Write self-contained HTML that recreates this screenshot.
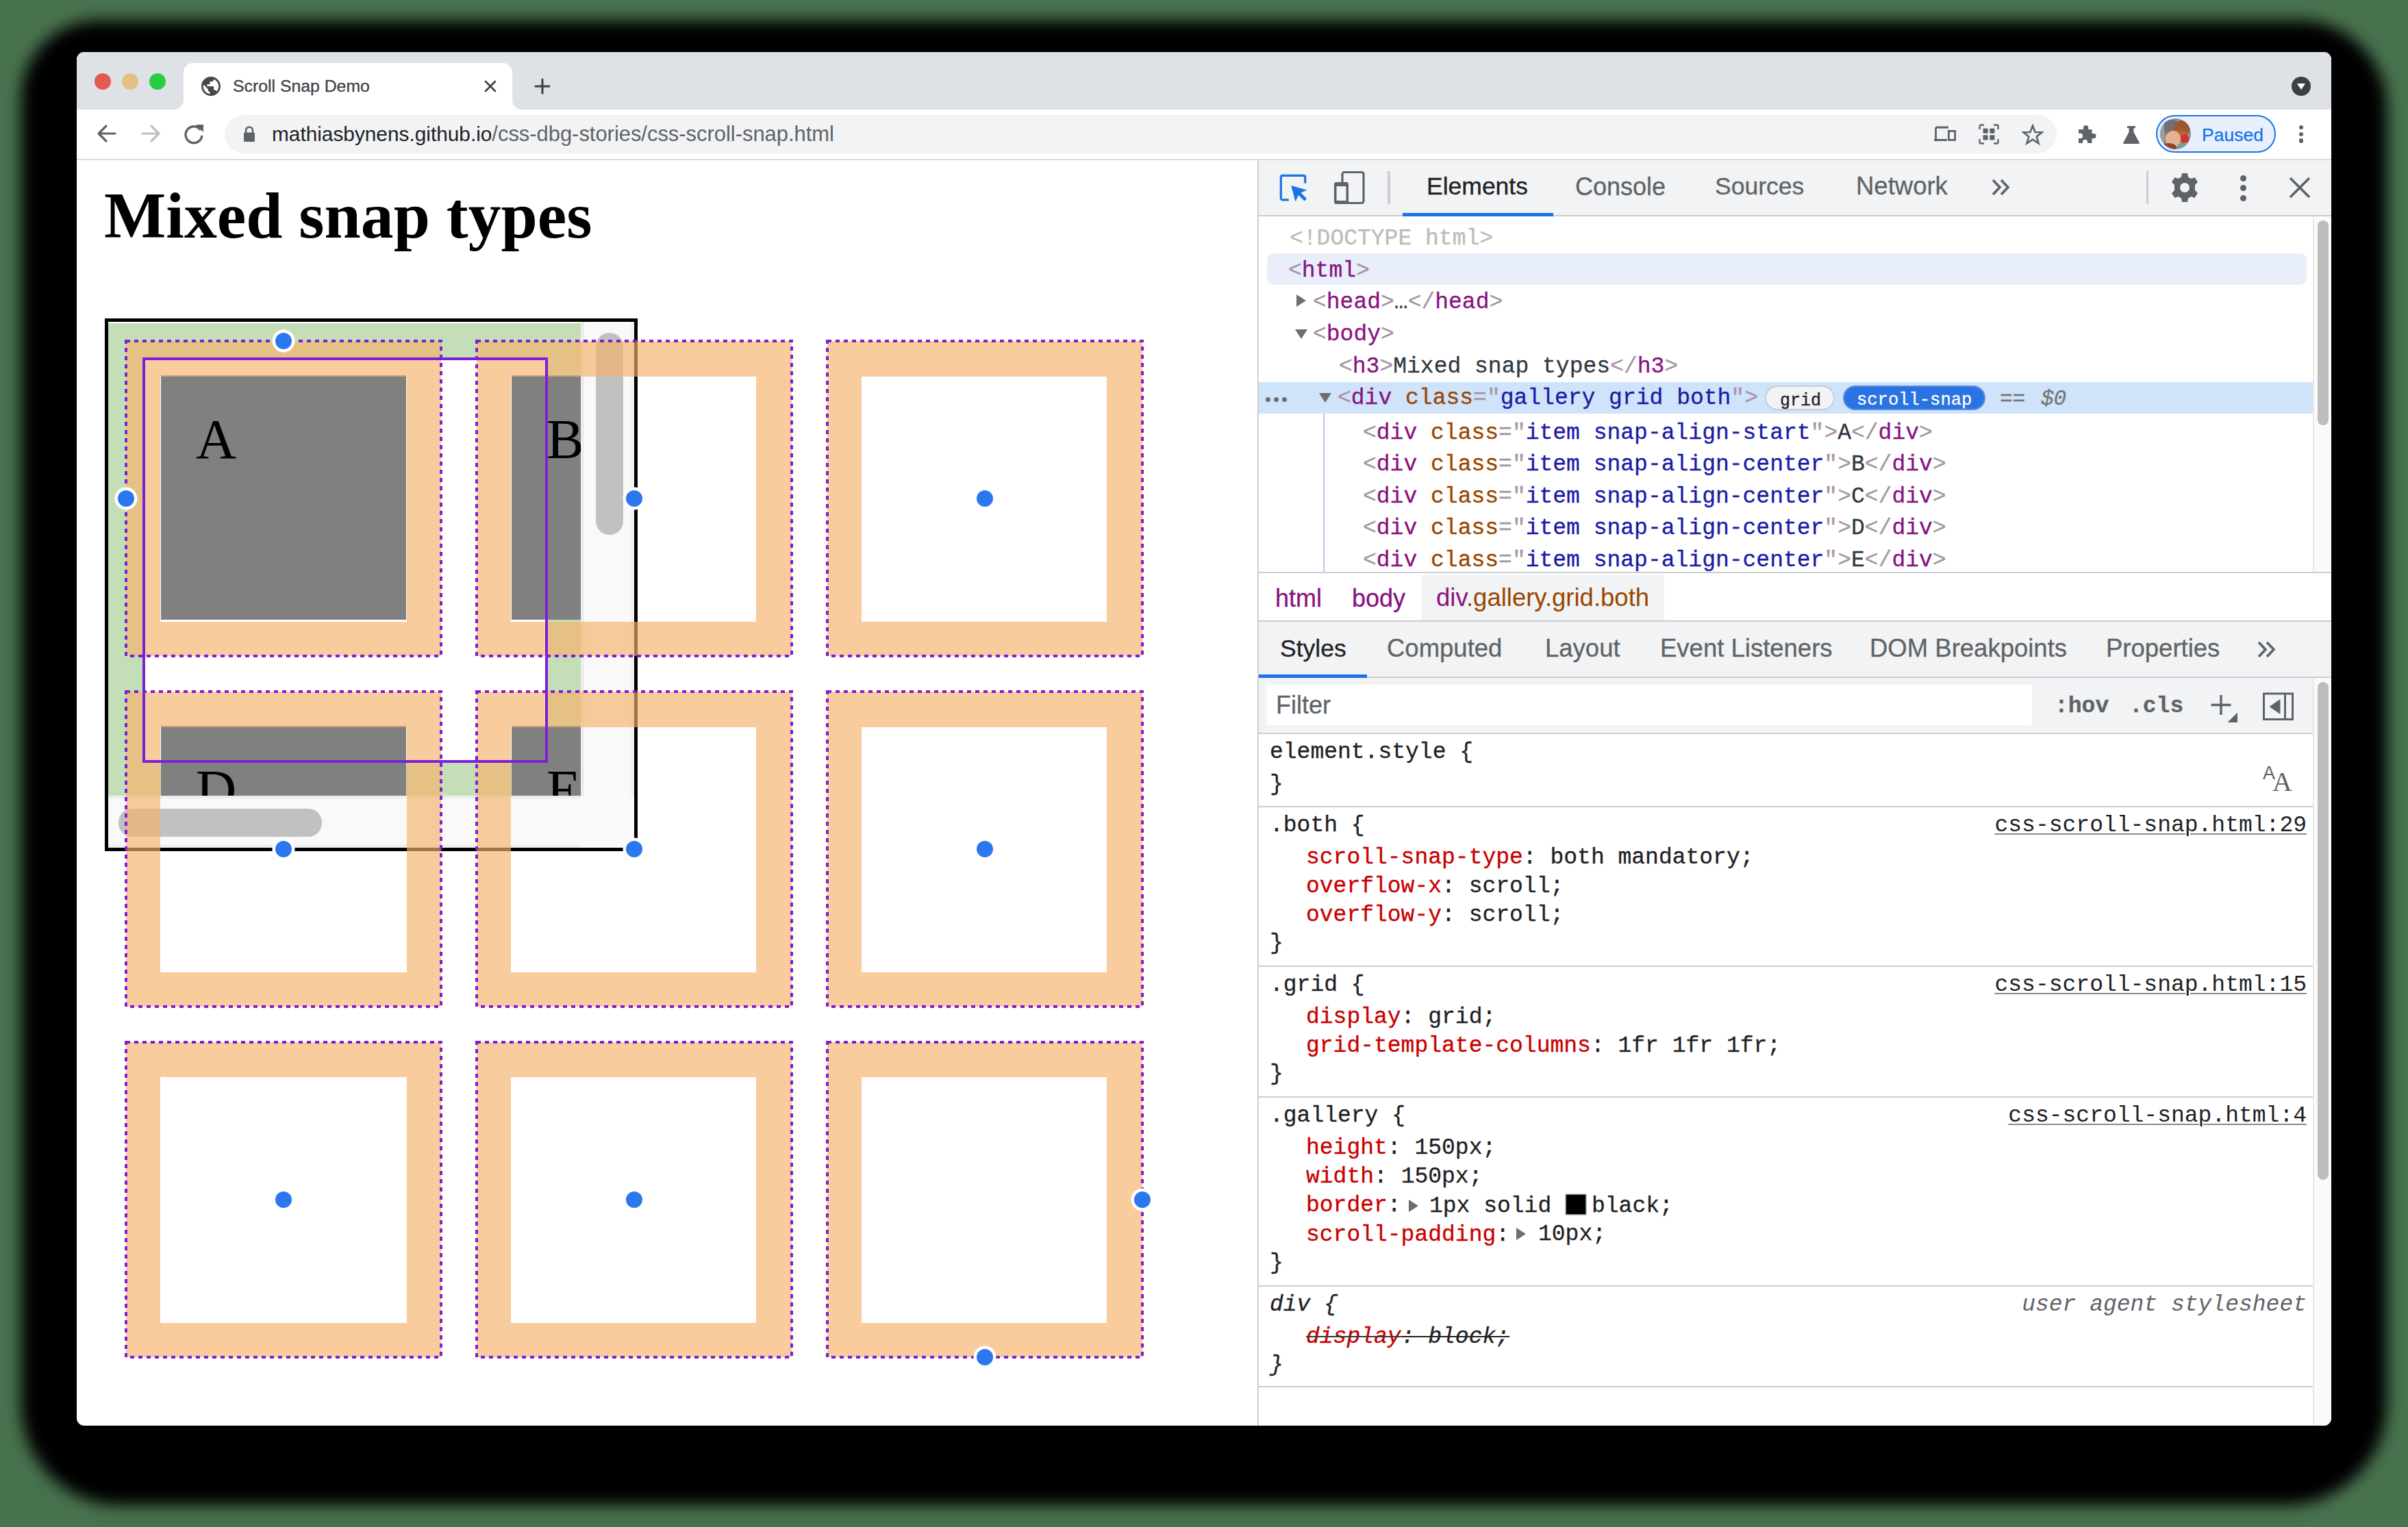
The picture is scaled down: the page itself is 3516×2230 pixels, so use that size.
<!DOCTYPE html><html><head><meta charset="utf-8"><style>html,body{margin:0;padding:0}.m{-webkit-text-stroke:0.3px currentColor}body{width:3516px;height:2230px;position:relative;overflow:hidden;background:#48724E}</style></head><body>
<div style="position:absolute;left:31px;top:30px;width:3454px;height:2168px;background:#000;border-radius:113px 127px 148px 145px;filter:blur(11px)"></div>
<div style="position:absolute;left:0;top:0;width:3516px;height:2230px;clip-path:inset(76px 112px 148px 112px round 11px)">
<div style="position:absolute;left:112px;top:76px;width:3292px;height:2006px;background:#fff;"></div>
<div style="position:absolute;left:112px;top:76px;width:3292px;height:84px;background:#DEE1E6;"></div>
<div style="position:absolute;left:138px;top:107px;width:24px;height:24px;border-radius:50%;background:#E25A50"></div>
<div style="position:absolute;left:178px;top:107px;width:24px;height:24px;border-radius:50%;background:#E4C082"></div>
<div style="position:absolute;left:218px;top:107px;width:24px;height:24px;border-radius:50%;background:#28CD41"></div>
<div style="position:absolute;left:268px;top:92px;width:480px;height:68px;background:#fff;border-radius:14px 14px 0 0"></div>
<svg style="position:absolute;left:254px;top:146px" width="14" height="14"><path d="M0 14 A14 14 0 0 0 14 0 L14 14 Z" fill="#fff"/></svg>
<svg style="position:absolute;left:748px;top:146px" width="14" height="14"><path d="M0 0 A14 14 0 0 0 14 14 L0 14 Z" fill="#fff"/></svg>
<svg style="position:absolute;left:294px;top:112px;" width="28" height="28" viewBox="0 0 28 28"><g transform="scale(1.4) translate(-2 -2)"><path d="M12 2C6.48 2 2 6.48 2 12s4.48 10 10 10 10-4.48 10-10S17.52 2 12 2zm-1 17.93c-3.95-.49-7-3.85-7-7.93 0-.62.08-1.21.21-1.79L9 15v1c0 1.1.9 2 2 2v1.93zm6.9-2.54c-.26-.81-1-1.39-1.9-1.39h-1v-3c0-.55-.45-1-1-1H8v-2h2c.55 0 1-.45 1-1V7h2c1.1 0 2-.9 2-2v-.41c2.93 1.19 5 4.06 5 7.41 0 2.08-.8 3.97-2.1 5.39z" fill="#45484C"/></g></svg>
<div class="m" style="position:absolute;left:340.00px;top:114.01px;font:normal normal 24.8px/24.8px 'Liberation Sans', sans-serif;color:#3C4043;white-space:pre;">Scroll Snap Demo</div>
<svg style="position:absolute;left:707px;top:117px;" width="18" height="18" viewBox="0 0 18 18"><path d="M2 2 L16 16 M16 2 L2 16" stroke="#3C4043" stroke-width="2.6" stroke-linecap="round"/></svg>
<svg style="position:absolute;left:780px;top:114px;" width="24" height="24" viewBox="0 0 24 24"><path d="M12 2 V22 M2 12 H22" stroke="#3C4043" stroke-width="3" stroke-linecap="round"/></svg>
<svg style="position:absolute;left:3346px;top:112px;" width="28" height="28" viewBox="0 0 28 28"><circle cx="14" cy="14" r="14" fill="#3C4043"/><path d="M8 10 H20 L14 19 Z" fill="#fff"/></svg>
<div style="position:absolute;left:112px;top:160px;width:3292px;height:72px;background:#fff;"></div>
<div style="position:absolute;left:112px;top:232px;width:3292px;height:2px;background:#DADCE0;"></div>
<svg style="position:absolute;left:138px;top:177px;" width="36" height="36" viewBox="0 0 36 36"><path d="M30 18 H7 M17 7 L6 18 L17 29" fill="none" stroke="#5F6368" stroke-width="3.2" stroke-linecap="round" stroke-linejoin="round"/></svg>
<svg style="position:absolute;left:202px;top:177px;" width="36" height="36" viewBox="0 0 36 36"><path d="M6 18 H29 M19 7 L30 18 L19 29" fill="none" stroke="#BDC1C6" stroke-width="3.2" stroke-linecap="round" stroke-linejoin="round"/></svg>
<svg style="position:absolute;left:266px;top:178px;" width="36" height="36" viewBox="0 0 36 36"><path d="M27 12 A12 12 0 1 0 29 20" fill="none" stroke="#5F6368" stroke-width="3.4"/><path d="M20 4 L31 4 L31 15 Z" fill="#5F6368"/></svg>
<div style="position:absolute;left:328px;top:168px;width:2675px;height:56px;border-radius:28px;background:#F1F3F4"></div>
<svg style="position:absolute;left:354px;top:183px;" width="20" height="26" viewBox="0 0 20 26"><path d="M5 11 V7.5 A5 5 0 0 1 15 7.5 V11" fill="none" stroke="#5F6368" stroke-width="2.6"/><rect x="2" y="10.5" width="16" height="13.5" rx="1.5" fill="#5F6368"/></svg>
<div style="position:absolute;left:397px;top:180.8px;font:normal 29.8px/29.8px 'Liberation Sans', sans-serif;white-space:pre"><span style="color:#202124">mathiasbynens.github.io</span><span style="color:#5F6368;font-size:30.9px">/css-dbg-stories/css-scroll-snap.html</span></div>
<svg style="position:absolute;left:2823px;top:184px;" width="34" height="24" viewBox="0 0 34 24"><path d="M3.5 2 H22 M3.5 2 V19 M1 20.5 H20" stroke="#5F6368" stroke-width="2.8" fill="none"/><rect x="22.4" y="7.4" width="9.2" height="13" fill="none" stroke="#5F6368" stroke-width="2.8"/></svg>
<svg style="position:absolute;left:2889px;top:181px;" width="30" height="30" viewBox="0 0 30 30"><path d="M1.5 8 V3.5 Q1.5 1.5 3.5 1.5 H8 M22 1.5 H26.5 Q28.5 1.5 28.5 3.5 V8 M28.5 22 V26.5 Q28.5 28.5 26.5 28.5 H22 M8 28.5 H3.5 Q1.5 28.5 1.5 26.5 V22" stroke="#5F6368" stroke-width="2.4" fill="none"/><rect x="6.5" y="6.5" width="7.2" height="7.2" rx="1.3" fill="#5F6368"/><rect x="16.3" y="6.5" width="7.2" height="7.2" rx="1.3" fill="#5F6368"/><rect x="6.5" y="16.3" width="7.2" height="7.2" rx="1.3" fill="#5F6368"/><rect x="16.3" y="16.3" width="7.2" height="7.2" rx="1.3" fill="#5F6368"/></svg>
<svg style="position:absolute;left:2952px;top:181px;" width="32" height="31" viewBox="0 0 32 31"><path d="M16 2.5 L19.6 12 L29.5 12.3 L21.7 18.5 L24.6 28.3 L16 22.6 L7.4 28.3 L10.3 18.5 L2.5 12.3 L12.4 12 Z" fill="none" stroke="#5F6368" stroke-width="2.6" stroke-linejoin="miter"/></svg>
<svg style="position:absolute;left:3033px;top:181px;" width="30" height="30" viewBox="0 0 30 30"><path d="M2 8 H9 V5.5 A3.6 3.6 0 0 1 16.2 5.5 V8 H21.5 V14 H24 A3.6 3.6 0 0 1 24 21.2 H21.5 V28 H15 V25.5 A3.6 3.6 0 0 0 8 25.5 V28 H2 V21 H4.5 A3.6 3.6 0 0 0 4.5 13.8 H2 Z" fill="#5F6368"/></svg>
<svg style="position:absolute;left:3099px;top:183px;" width="26" height="28" viewBox="0 0 26 28"><path d="M7 1 H19 V4 H16.5 V10 L24.5 25 Q25.5 27 23.5 27 H2.5 Q0.5 27 1.5 25 L9.5 10 V4 H7 Z" fill="#5F6368"/></svg>
<div style="position:absolute;left:3148px;top:168px;width:175px;height:55px;box-sizing:border-box;border:2.5px solid #1A73E8;border-radius:28px;background:#E8F0FE"></div>
<svg style="position:absolute;left:3154px;top:173px;" width="45" height="45" viewBox="0 0 45 45"><defs><clipPath id="av"><circle cx="22.5" cy="22.5" r="22.5"/></clipPath></defs><g clip-path="url(#av)"><rect width="45" height="45" fill="#8C8F93"/><ellipse cx="16" cy="12" rx="14" ry="10" fill="#6E7074"/><ellipse cx="32" cy="14" rx="12" ry="11" fill="#A0582E"/><ellipse cx="24" cy="22" rx="16" ry="5" fill="#B5652F"/><ellipse cx="19" cy="30" rx="11" ry="12" fill="#E2B394"/><ellipse cx="36" cy="30" rx="6" ry="7" fill="#D8322A"/><ellipse cx="38" cy="42" rx="9" ry="7" fill="#6FA79A"/><ellipse cx="12" cy="42" rx="12" ry="6" fill="#8A4A2A"/><rect x="0" y="0" width="6" height="45" fill="#9A9DA1"/></g></svg>
<div class="m" style="position:absolute;left:3215.00px;top:183.57px;font:normal normal 26.5px/26.5px 'Liberation Sans', sans-serif;color:#1A73E8;white-space:pre;">Paused</div>
<div style="position:absolute;left:3356.5px;top:182.7px;width:6.6px;height:6.6px;border-radius:50%;background:#5F6368"></div>
<div style="position:absolute;left:3356.5px;top:192.7px;width:6.6px;height:6.6px;border-radius:50%;background:#5F6368"></div>
<div style="position:absolute;left:3356.5px;top:202.29999999999998px;width:6.6px;height:6.6px;border-radius:50%;background:#5F6368"></div>
<div style="position:absolute;left:152.00px;top:268.35px;font:normal bold 95.7px/95.7px 'Liberation Serif', serif;color:#000;white-space:pre;">Mixed snap types</div>
<div style="position:absolute;left:153px;top:465px;width:778px;height:778px;background:#000;"></div>
<div style="position:absolute;left:158px;top:470px;width:768px;height:768px;background:#fff;"></div>
<div style="position:absolute;left:158px;top:470px;width:690px;height:692px;overflow:hidden">
<div style="position:absolute;left:0px;top:2px;width:690px;height:50px;background:rgba(147,196,125,0.55);"></div>
<div style="position:absolute;left:0px;top:644px;width:690px;height:48px;background:rgba(147,196,125,0.55);"></div>
<div style="position:absolute;left:0px;top:52px;width:50px;height:592px;background:rgba(147,196,125,0.55);"></div>
<div style="position:absolute;left:642px;top:52px;width:48px;height:592px;background:rgba(147,196,125,0.55);"></div>
<div style="position:absolute;left:77px;top:77.5px;width:358px;height:357.2px;background:#808080;"></div>
<div style="position:absolute;left:128px;top:125.0px;font:normal 82px/94px 'Liberation Serif', serif;color:#000">A</div>
<div style="position:absolute;left:589px;top:77.5px;width:358px;height:357.2px;background:#808080;"></div>
<div style="position:absolute;left:640px;top:125.0px;font:normal 82px/94px 'Liberation Serif', serif;color:#000">B</div>
<div style="position:absolute;left:77px;top:589.5px;width:358px;height:357.2px;background:#808080;"></div>
<div style="position:absolute;left:128px;top:637.0px;font:normal 82px/94px 'Liberation Serif', serif;color:#000">D</div>
<div style="position:absolute;left:589px;top:589.5px;width:358px;height:357.2px;background:#808080;"></div>
<div style="position:absolute;left:640px;top:637.0px;font:normal 82px/94px 'Liberation Serif', serif;color:#000">E</div>
</div>
<div style="position:absolute;left:848px;top:470px;width:78px;height:692px;background:#F9F9F9;box-shadow:inset 5px 0 0 #EDEDED, inset -5px 0 0 #F1F1F1"></div>
<div style="position:absolute;left:158px;top:1162px;width:690px;height:76px;background:#F9F9F9;box-shadow:inset 0 4px 0 #EDEDED, inset 0 -5px 0 #F1F1F1"></div>
<div style="position:absolute;left:848px;top:1162px;width:78px;height:76px;background:#F9F9F9;"></div>
<div style="position:absolute;left:870px;top:486px;width:40px;height:295px;background:#C1C1C1;border-radius:20px"></div>
<div style="position:absolute;left:173px;top:1181px;width:297px;height:41px;background:#C1C1C1;border-radius:20px"></div>
<div style="position:absolute;left:184px;top:498px;width:460px;height:460px;box-sizing:border-box;border:50px solid rgba(246,178,107,0.66);border-top-width:52px;border-right-width:50px"></div>
<div style="position:absolute;left:696px;top:498px;width:460px;height:460px;box-sizing:border-box;border:50px solid rgba(246,178,107,0.66);border-top-width:52px;border-right-width:52px"></div>
<div style="position:absolute;left:1208px;top:498px;width:460px;height:460px;box-sizing:border-box;border:50px solid rgba(246,178,107,0.66);border-top-width:52px;border-right-width:52px"></div>
<div style="position:absolute;left:184px;top:1010px;width:460px;height:460px;box-sizing:border-box;border:50px solid rgba(246,178,107,0.66);border-top-width:52px;border-right-width:50px"></div>
<div style="position:absolute;left:696px;top:1010px;width:460px;height:460px;box-sizing:border-box;border:50px solid rgba(246,178,107,0.66);border-top-width:52px;border-right-width:52px"></div>
<div style="position:absolute;left:1208px;top:1010px;width:460px;height:460px;box-sizing:border-box;border:50px solid rgba(246,178,107,0.66);border-top-width:52px;border-right-width:52px"></div>
<div style="position:absolute;left:184px;top:1522px;width:460px;height:460px;box-sizing:border-box;border:50px solid rgba(246,178,107,0.66);border-top-width:51px;border-right-width:50px"></div>
<div style="position:absolute;left:696px;top:1522px;width:460px;height:460px;box-sizing:border-box;border:50px solid rgba(246,178,107,0.66);border-top-width:51px;border-right-width:52px"></div>
<div style="position:absolute;left:1208px;top:1522px;width:460px;height:460px;box-sizing:border-box;border:50px solid rgba(246,178,107,0.66);border-top-width:51px;border-right-width:52px"></div>
<svg style="position:absolute;left:0;top:0" width="1836" height="2082"><rect x="184" y="498" width="460" height="460" fill="none" stroke="#7D1FD6" stroke-width="4" stroke-dasharray="6 6"/><rect x="696" y="498" width="460" height="460" fill="none" stroke="#7D1FD6" stroke-width="4" stroke-dasharray="6 6"/><rect x="1208" y="498" width="460" height="460" fill="none" stroke="#7D1FD6" stroke-width="4" stroke-dasharray="6 6"/><rect x="184" y="1010" width="460" height="460" fill="none" stroke="#7D1FD6" stroke-width="4" stroke-dasharray="6 6"/><rect x="696" y="1010" width="460" height="460" fill="none" stroke="#7D1FD6" stroke-width="4" stroke-dasharray="6 6"/><rect x="1208" y="1010" width="460" height="460" fill="none" stroke="#7D1FD6" stroke-width="4" stroke-dasharray="6 6"/><rect x="184" y="1522" width="460" height="460" fill="none" stroke="#7D1FD6" stroke-width="4" stroke-dasharray="6 6"/><rect x="696" y="1522" width="460" height="460" fill="none" stroke="#7D1FD6" stroke-width="4" stroke-dasharray="6 6"/><rect x="1208" y="1522" width="460" height="460" fill="none" stroke="#7D1FD6" stroke-width="4" stroke-dasharray="6 6"/><rect x="210" y="524" width="588" height="588" fill="none" stroke="#7D1FD6" stroke-width="4"/><circle cx="414" cy="498" r="16.5" fill="#fff"/><circle cx="414" cy="498" r="12" fill="#2B78EE"/><circle cx="184" cy="728" r="16.5" fill="#fff"/><circle cx="184" cy="728" r="12" fill="#2B78EE"/><circle cx="926" cy="728" r="16.5" fill="#fff"/><circle cx="926" cy="728" r="12" fill="#2B78EE"/><circle cx="1438" cy="728" r="16.5" fill="#fff"/><circle cx="1438" cy="728" r="12" fill="#2B78EE"/><circle cx="414" cy="1240" r="16.5" fill="#fff"/><circle cx="414" cy="1240" r="12" fill="#2B78EE"/><circle cx="926" cy="1240" r="16.5" fill="#fff"/><circle cx="926" cy="1240" r="12" fill="#2B78EE"/><circle cx="1438" cy="1240" r="16.5" fill="#fff"/><circle cx="1438" cy="1240" r="12" fill="#2B78EE"/><circle cx="414" cy="1752" r="16.5" fill="#fff"/><circle cx="414" cy="1752" r="12" fill="#2B78EE"/><circle cx="926" cy="1752" r="16.5" fill="#fff"/><circle cx="926" cy="1752" r="12" fill="#2B78EE"/><circle cx="1668" cy="1752" r="16.5" fill="#fff"/><circle cx="1668" cy="1752" r="12" fill="#2B78EE"/><circle cx="1438" cy="1982" r="16.5" fill="#fff"/><circle cx="1438" cy="1982" r="12" fill="#2B78EE"/></svg>
<div style="position:absolute;left:1836px;top:234px;width:2px;height:1848px;background:#CACDD1;"></div>
<div style="position:absolute;left:1838px;top:234px;width:1566px;height:80px;background:#F1F3F4;"></div>
<div style="position:absolute;left:1838px;top:314px;width:1566px;height:2px;background:#CACDD1;"></div>
<svg style="position:absolute;left:1866px;top:252px;" width="48" height="48" viewBox="0 0 48 48"><path d="M15.8 39.8 H7 Q4.3 39.8 4.3 37 V7 Q4.3 4.3 7 4.3 H37 Q39.7 4.3 39.7 7 V15.6" fill="none" stroke="#1A73E8" stroke-width="3.2"/><path d="M19.3 19 L42.4 25.5 L33.5 29.5 L42 38.2 L38.6 41.6 L30 33 L25.4 42.5 Z" fill="#1A73E8"/></svg>
<svg style="position:absolute;left:1944px;top:248px;" width="50" height="52" viewBox="0 0 50 52"><rect x="16" y="3.5" width="31" height="45" rx="3" fill="none" stroke="#5F6368" stroke-width="3.2"/><rect x="4" y="18" width="21" height="32" rx="3" fill="#5F6368"/><rect x="7.5" y="24" width="14" height="21" fill="#F1F3F4"/></svg>
<div style="position:absolute;left:2026px;top:250px;width:4px;height:48px;background:#CACDD1;"></div>
<div class="m" style="position:absolute;left:2083.00px;top:254.95px;font:normal normal 35.5px/35.5px 'Liberation Sans', sans-serif;color:#202124;white-space:pre;">Elements</div>
<div class="m" style="position:absolute;left:2300.00px;top:254.53px;font:normal normal 36px/36px 'Liberation Sans', sans-serif;color:#5F6368;white-space:pre;">Console</div>
<div class="m" style="position:absolute;left:2504.00px;top:254.95px;font:normal normal 35.5px/35.5px 'Liberation Sans', sans-serif;color:#5F6368;white-space:pre;">Sources</div>
<div class="m" style="position:absolute;left:2710.00px;top:254.10px;font:normal normal 36.5px/36.5px 'Liberation Sans', sans-serif;color:#5F6368;white-space:pre;">Network</div>
<svg style="position:absolute;left:2907px;top:260px;" width="32" height="28" viewBox="0 0 32 28"><path d="M3 3 L13 13.5 L3 24 M15 3 L25 13.5 L15 24" fill="none" stroke="#5F6368" stroke-width="3.6"/></svg>
<div style="position:absolute;left:2048px;top:311px;width:220px;height:5px;background:#1A73E8;"></div>
<div style="position:absolute;left:3134px;top:250px;width:3px;height:48px;background:#CACDD1;"></div>
<svg style="position:absolute;left:3166px;top:250px;" width="48" height="48" viewBox="0 0 48 48"><g transform="translate(24 24)" fill="#5F6368"><path d="M-4 -21 H4 L5 -15.5 L9.5 -13 L14.5 -15 L19 -8 L15 -4 L15 4 L19 8 L14.5 15 L9.5 13 L5 15.5 L4 21 H-4 L-5 15.5 L-9.5 13 L-14.5 15 L-19 8 L-15 4 L-15 -4 L-19 -8 L-14.5 -15 L-9.5 -13 L-5 -15.5 Z"/><circle r="7" fill="#F1F3F4"/></g></svg>
<div style="position:absolute;left:3271px;top:256px;width:9px;height:9px;border-radius:50%;background:#5F6368"></div>
<div style="position:absolute;left:3271px;top:270px;width:9px;height:9px;border-radius:50%;background:#5F6368"></div>
<div style="position:absolute;left:3271px;top:285px;width:9px;height:9px;border-radius:50%;background:#5F6368"></div>
<svg style="position:absolute;left:3340px;top:256px;" width="36" height="36" viewBox="0 0 36 36"><path d="M4 4 L32 32 M32 4 L4 32" stroke="#5F6368" stroke-width="3.6"/></svg>
<div style="position:absolute;left:1838px;top:316px;width:1566px;height:520px;background:#fff;"></div>
<div style="position:absolute;left:3377px;top:316px;width:27px;height:520px;background:#FAFAFA;box-shadow:inset 2px 0 0 #E8E8E8"></div>
<div style="position:absolute;left:3384px;top:322px;width:16px;height:299px;background:#BDBDBD;border-radius:8px"></div>
<div style="position:absolute;left:1850px;top:370px;width:1518px;height:46px;background:#E9EFFA;border-radius:10px"></div>
<div style="position:absolute;left:1838px;top:558px;width:1539px;height:46px;background:#CFE3FA;"></div>
<div style="position:absolute;left:1932px;top:604px;width:2px;height:232px;background:#B9C7E6;"></div>
<div class="m" style="position:absolute;left:1883px;top:332.41px;font:normal 33px/33px 'Liberation Mono', monospace;white-space:pre"><span style="color:#BBBBBB;">&lt;!DOCTYPE html&gt;</span></div>
<div class="m" style="position:absolute;left:1881px;top:378.51px;font:normal 33px/33px 'Liberation Mono', monospace;white-space:pre"><span style="color:#A894A6;">&lt;</span><span style="color:#881280;">html</span><span style="color:#A894A6;">&gt;</span></div>
<svg style="position:absolute;left:1892px;top:428.6px;" width="16" height="20" viewBox="0 0 16 20"><path d="M1 1 L15 10 L1 19 Z" fill="#6E6E6E"/></svg>
<div class="m" style="position:absolute;left:1917px;top:425.31px;font:normal 33px/33px 'Liberation Mono', monospace;white-space:pre"><span style="color:#A894A6;">&lt;</span><span style="color:#881280;">head</span><span style="color:#A894A6;">&gt;</span><span style="color:#303942;">…</span><span style="color:#A894A6;">&lt;/</span><span style="color:#881280;">head</span><span style="color:#A894A6;">&gt;</span></div>
<svg style="position:absolute;left:1890px;top:480.0px;" width="20" height="16" viewBox="0 0 20 16"><path d="M1 1 H19 L10 15 Z" fill="#6E6E6E"/></svg>
<div class="m" style="position:absolute;left:1917px;top:471.71px;font:normal 33px/33px 'Liberation Mono', monospace;white-space:pre"><span style="color:#A894A6;">&lt;</span><span style="color:#881280;">body</span><span style="color:#A894A6;">&gt;</span></div>
<div class="m" style="position:absolute;left:1955px;top:518.71px;font:normal 33px/33px 'Liberation Mono', monospace;white-space:pre"><span style="color:#A894A6;">&lt;</span><span style="color:#881280;">h3</span><span style="color:#A894A6;">&gt;</span><span style="color:#303942;">Mixed snap types</span><span style="color:#A894A6;">&lt;/</span><span style="color:#881280;">h3</span><span style="color:#A894A6;">&gt;</span></div>
<div style="position:absolute;left:1848px;top:579.5px;width:7px;height:7px;border-radius:50%;background:#6E6E6E"></div>
<div style="position:absolute;left:1860px;top:579.5px;width:7px;height:7px;border-radius:50%;background:#6E6E6E"></div>
<div style="position:absolute;left:1872px;top:579.5px;width:7px;height:7px;border-radius:50%;background:#6E6E6E"></div>
<svg style="position:absolute;left:1925px;top:572.5px;" width="20" height="16" viewBox="0 0 20 16"><path d="M1 1 H19 L10 15 Z" fill="#6E6E6E"/></svg>
<div class="m" style="position:absolute;left:1953px;top:565.21px;font:normal 33px/33px 'Liberation Mono', monospace;white-space:pre"><span style="color:#A894A6;">&lt;</span><span style="color:#881280;">div</span><span style="color:#303942;"> </span><span style="color:#994500;">class</span><span style="color:#A894A6;">=&quot;</span><span style="color:#1A1AA6;">gallery grid both</span><span style="color:#A894A6;">&quot;</span><span style="color:#A894A6;">&gt;</span></div>
<div style="position:absolute;left:2577px;top:563px;width:102px;height:36px;box-sizing:border-box;border:2px solid #CBCDD1;border-radius:18px;background:#F1F3F4"></div>
<div class="m" style="position:absolute;left:2599px;top:572.84px;font:normal 25px/25px 'Liberation Mono', monospace;white-space:pre"><span style="color:#202124;">grid</span></div>
<div style="position:absolute;left:2691px;top:563px;width:208px;height:36px;box-sizing:border-box;border:2px solid #5B8FE0;border-radius:18px;background:#2A73E3"></div>
<div class="m" style="position:absolute;left:2711px;top:572.45px;font:normal 25.5px/25.5px 'Liberation Mono', monospace;white-space:pre"><span style="color:#fff;">scroll-snap</span></div>
<div class="m" style="position:absolute;left:2920px;top:567.24px;font:normal 31px/31px 'Liberation Mono', monospace;white-space:pre"><span style="color:#757575;">==</span></div>
<div class="m" style="position:absolute;left:2980px;top:567.24px;font:normal 31px/31px 'Liberation Mono', monospace;white-space:pre"><span style="color:#757575;font-style:italic">$0</span></div>
<div class="m" style="position:absolute;left:1990px;top:615.71px;font:normal 33px/33px 'Liberation Mono', monospace;white-space:pre"><span style="color:#A894A6;">&lt;</span><span style="color:#881280;">div</span><span style="color:#303942;"> </span><span style="color:#994500;">class</span><span style="color:#A894A6;">=&quot;</span><span style="color:#1A1AA6;">item snap-align-start</span><span style="color:#A894A6;">&quot;</span><span style="color:#A894A6;">&gt;</span><span style="color:#303942;">A</span><span style="color:#A894A6;">&lt;/</span><span style="color:#881280;">div</span><span style="color:#A894A6;">&gt;</span></div>
<div class="m" style="position:absolute;left:1990px;top:662.21px;font:normal 33px/33px 'Liberation Mono', monospace;white-space:pre"><span style="color:#A894A6;">&lt;</span><span style="color:#881280;">div</span><span style="color:#303942;"> </span><span style="color:#994500;">class</span><span style="color:#A894A6;">=&quot;</span><span style="color:#1A1AA6;">item snap-align-center</span><span style="color:#A894A6;">&quot;</span><span style="color:#A894A6;">&gt;</span><span style="color:#303942;">B</span><span style="color:#A894A6;">&lt;/</span><span style="color:#881280;">div</span><span style="color:#A894A6;">&gt;</span></div>
<div class="m" style="position:absolute;left:1990px;top:708.71px;font:normal 33px/33px 'Liberation Mono', monospace;white-space:pre"><span style="color:#A894A6;">&lt;</span><span style="color:#881280;">div</span><span style="color:#303942;"> </span><span style="color:#994500;">class</span><span style="color:#A894A6;">=&quot;</span><span style="color:#1A1AA6;">item snap-align-center</span><span style="color:#A894A6;">&quot;</span><span style="color:#A894A6;">&gt;</span><span style="color:#303942;">C</span><span style="color:#A894A6;">&lt;/</span><span style="color:#881280;">div</span><span style="color:#A894A6;">&gt;</span></div>
<div class="m" style="position:absolute;left:1990px;top:755.21px;font:normal 33px/33px 'Liberation Mono', monospace;white-space:pre"><span style="color:#A894A6;">&lt;</span><span style="color:#881280;">div</span><span style="color:#303942;"> </span><span style="color:#994500;">class</span><span style="color:#A894A6;">=&quot;</span><span style="color:#1A1AA6;">item snap-align-center</span><span style="color:#A894A6;">&quot;</span><span style="color:#A894A6;">&gt;</span><span style="color:#303942;">D</span><span style="color:#A894A6;">&lt;/</span><span style="color:#881280;">div</span><span style="color:#A894A6;">&gt;</span></div>
<div class="m" style="position:absolute;left:1990px;top:801.71px;font:normal 33px/33px 'Liberation Mono', monospace;white-space:pre"><span style="color:#A894A6;">&lt;</span><span style="color:#881280;">div</span><span style="color:#303942;"> </span><span style="color:#994500;">class</span><span style="color:#A894A6;">=&quot;</span><span style="color:#1A1AA6;">item snap-align-center</span><span style="color:#A894A6;">&quot;</span><span style="color:#A894A6;">&gt;</span><span style="color:#303942;">E</span><span style="color:#A894A6;">&lt;/</span><span style="color:#881280;">div</span><span style="color:#A894A6;">&gt;</span></div>
<div style="position:absolute;left:1838px;top:835px;width:1566px;height:2px;background:#CACDD1;"></div>
<div style="position:absolute;left:1838px;top:837px;width:1566px;height:70px;background:#fff;"></div>
<div style="position:absolute;left:2076px;top:840px;width:354px;height:66px;background:#F1F3F4;"></div>
<div class="m" style="position:absolute;left:1862.00px;top:855.53px;font:normal normal 36px/36px 'Liberation Sans', sans-serif;color:#881280;white-space:pre;">html</div>
<div class="m" style="position:absolute;left:1974.00px;top:855.53px;font:normal normal 36px/36px 'Liberation Sans', sans-serif;color:#881280;white-space:pre;">body</div>
<div style="position:absolute;left:2097px;top:855.1px;font:normal 36.5px/36.5px 'Liberation Sans', sans-serif;white-space:pre"><span style="color:#881280">div</span><span style="color:#994500">.gallery.grid.both</span></div>
<div style="position:absolute;left:1838px;top:906px;width:1566px;height:2px;background:#CACDD1;"></div>
<div style="position:absolute;left:1838px;top:908px;width:1566px;height:80px;background:#F1F3F4;"></div>
<div style="position:absolute;left:1838px;top:988px;width:1566px;height:2px;background:#CACDD1;"></div>
<div style="position:absolute;left:1838px;top:985px;width:158px;height:5px;background:#1A73E8;"></div>
<div class="m" style="position:absolute;left:1869.00px;top:929.95px;font:normal normal 35.5px/35.5px 'Liberation Sans', sans-serif;color:#202124;white-space:pre;">Styles</div>
<div class="m" style="position:absolute;left:2025.00px;top:929.10px;font:normal normal 36.5px/36.5px 'Liberation Sans', sans-serif;color:#5F6368;white-space:pre;">Computed</div>
<div class="m" style="position:absolute;left:2256.00px;top:929.10px;font:normal normal 36.5px/36.5px 'Liberation Sans', sans-serif;color:#5F6368;white-space:pre;">Layout</div>
<div class="m" style="position:absolute;left:2424.00px;top:929.10px;font:normal normal 36.5px/36.5px 'Liberation Sans', sans-serif;color:#5F6368;white-space:pre;">Event Listeners</div>
<div class="m" style="position:absolute;left:2730.00px;top:929.10px;font:normal normal 36.5px/36.5px 'Liberation Sans', sans-serif;color:#5F6368;white-space:pre;">DOM Breakpoints</div>
<div class="m" style="position:absolute;left:3075.00px;top:929.10px;font:normal normal 36.5px/36.5px 'Liberation Sans', sans-serif;color:#5F6368;white-space:pre;">Properties</div>
<svg style="position:absolute;left:3295px;top:935px;" width="32" height="28" viewBox="0 0 32 28"><path d="M3 3 L13 13.5 L3 24 M15 3 L25 13.5 L15 24" fill="none" stroke="#5F6368" stroke-width="3.6"/></svg>
<div style="position:absolute;left:1838px;top:990px;width:1539px;height:80px;background:#F1F3F4;"></div>
<div style="position:absolute;left:1850px;top:1000px;width:1117px;height:59px;background:#fff;"></div>
<div class="m" style="position:absolute;left:1863.00px;top:1011.53px;font:normal normal 36px/36px 'Liberation Sans', sans-serif;color:#5F6368;white-space:pre;">Filter</div>
<div class="m" style="position:absolute;left:3000px;top:1014.71px;font:normal 33px/33px 'Liberation Mono', monospace;white-space:pre"><span style="color:#5F6368;font-weight:bold">:hov</span></div>
<div class="m" style="position:absolute;left:3109px;top:1014.71px;font:normal 33px/33px 'Liberation Mono', monospace;white-space:pre"><span style="color:#5F6368;font-weight:bold">.cls</span></div>
<svg style="position:absolute;left:3224px;top:1010px;" width="54" height="46" viewBox="0 0 54 46"><path d="M19 5 V34 M4.5 19.5 H33.5" stroke="#5F6368" stroke-width="3.4"/><path d="M43 45 L43 30.5 L28.5 45 Z" fill="#5F6368"/></svg>
<svg style="position:absolute;left:3302px;top:1010px;" width="48" height="44" viewBox="0 0 48 44"><rect x="3.5" y="3" width="42" height="37.5" fill="none" stroke="#5F6368" stroke-width="3"/><path d="M34.5 3 V40.5" stroke="#5F6368" stroke-width="3"/><path d="M27.5 11 V33 L11.5 22 Z" fill="#5F6368"/></svg>
<div style="position:absolute;left:1838px;top:1070px;width:1539px;height:2px;background:#CACDD1;"></div>
<div style="position:absolute;left:1838px;top:1072px;width:1539px;height:1010px;background:#fff;"></div>
<div style="position:absolute;left:3377px;top:990px;width:27px;height:1092px;background:#FAFAFA;box-shadow:inset 2px 0 0 #E8E8E8"></div>
<div style="position:absolute;left:3384px;top:996px;width:16px;height:727px;background:#BDBDBD;border-radius:8px"></div>
<div class="m" style="position:absolute;left:1854px;top:1082.21px;font:normal 33px/33px 'Liberation Mono', monospace;white-space:pre"><span style="color:#202124;">element.style {</span></div>
<div class="m" style="position:absolute;left:1854px;top:1128.71px;font:normal 33px/33px 'Liberation Mono', monospace;white-space:pre"><span style="color:#202124;">}</span></div>
<div style="position:absolute;left:3304px;top:1116px;font:normal 27px/27px 'Liberation Sans', sans-serif;color:#5F6368">A</div>
<div style="position:absolute;left:3318px;top:1122px;font:normal 40px/40px 'Liberation Serif', serif;color:#5F6368">A</div>
<div style="position:absolute;left:1838px;top:1177px;width:1539px;height:2px;background:#CACDD1;"></div>
<div class="m" style="position:absolute;left:1854px;top:1188.71px;font:normal 33px/33px 'Liberation Mono', monospace;white-space:pre"><span style="color:#202124;">.both {</span></div>
<div style="position:absolute;right:148px;top:1188.71px;font:normal 33px/33px 'Liberation Mono', monospace;color:#202124;white-space:pre;text-decoration:underline;text-decoration-color:#8A8A8A;text-decoration-thickness:1.6px;text-underline-offset:3px">css-scroll-snap.html:29</div>
<div class="m" style="position:absolute;left:1907px;top:1235.71px;font:normal 33px/33px 'Liberation Mono', monospace;white-space:pre"><span style="color:#C80000;">scroll-snap-type</span><span style="color:#202124;">: </span><span style="color:#202124;">both mandatory;</span></div>
<div class="m" style="position:absolute;left:1907px;top:1278.01px;font:normal 33px/33px 'Liberation Mono', monospace;white-space:pre"><span style="color:#C80000;">overflow-x</span><span style="color:#202124;">: </span><span style="color:#202124;">scroll;</span></div>
<div class="m" style="position:absolute;left:1907px;top:1320.31px;font:normal 33px/33px 'Liberation Mono', monospace;white-space:pre"><span style="color:#C80000;">overflow-y</span><span style="color:#202124;">: </span><span style="color:#202124;">scroll;</span></div>
<div class="m" style="position:absolute;left:1854px;top:1361.31px;font:normal 33px/33px 'Liberation Mono', monospace;white-space:pre"><span style="color:#202124;">}</span></div>
<div style="position:absolute;left:1838px;top:1410px;width:1539px;height:2px;background:#CACDD1;"></div>
<div class="m" style="position:absolute;left:1854px;top:1421.71px;font:normal 33px/33px 'Liberation Mono', monospace;white-space:pre"><span style="color:#202124;">.grid {</span></div>
<div style="position:absolute;right:148px;top:1421.71px;font:normal 33px/33px 'Liberation Mono', monospace;color:#202124;white-space:pre;text-decoration:underline;text-decoration-color:#8A8A8A;text-decoration-thickness:1.6px;text-underline-offset:3px">css-scroll-snap.html:15</div>
<div class="m" style="position:absolute;left:1907px;top:1468.71px;font:normal 33px/33px 'Liberation Mono', monospace;white-space:pre"><span style="color:#C80000;">display</span><span style="color:#202124;">: </span><span style="color:#202124;">grid;</span></div>
<div class="m" style="position:absolute;left:1907px;top:1511.01px;font:normal 33px/33px 'Liberation Mono', monospace;white-space:pre"><span style="color:#C80000;">grid-template-columns</span><span style="color:#202124;">: </span><span style="color:#202124;">1fr 1fr 1fr;</span></div>
<div class="m" style="position:absolute;left:1854px;top:1552.01px;font:normal 33px/33px 'Liberation Mono', monospace;white-space:pre"><span style="color:#202124;">}</span></div>
<div style="position:absolute;left:1838px;top:1601px;width:1539px;height:2px;background:#CACDD1;"></div>
<div class="m" style="position:absolute;left:1854px;top:1612.71px;font:normal 33px/33px 'Liberation Mono', monospace;white-space:pre"><span style="color:#202124;">.gallery {</span></div>
<div style="position:absolute;right:148px;top:1612.71px;font:normal 33px/33px 'Liberation Mono', monospace;color:#202124;white-space:pre;text-decoration:underline;text-decoration-color:#8A8A8A;text-decoration-thickness:1.6px;text-underline-offset:3px">css-scroll-snap.html:4</div>
<div class="m" style="position:absolute;left:1907px;top:1659.71px;font:normal 33px/33px 'Liberation Mono', monospace;white-space:pre"><span style="color:#C80000;">height</span><span style="color:#202124;">: </span><span style="color:#202124;">150px;</span></div>
<div class="m" style="position:absolute;left:1907px;top:1702.01px;font:normal 33px/33px 'Liberation Mono', monospace;white-space:pre"><span style="color:#C80000;">width</span><span style="color:#202124;">: </span><span style="color:#202124;">150px;</span></div>
<div class="m" style="position:absolute;left:1907px;top:1744.31px;font:normal 33px/33px 'Liberation Mono', monospace;white-space:pre"><span style="color:#C80000;">border</span><span style="color:#202124;">:</span></div>
<div class="m" style="position:absolute;left:1907px;top:1786.61px;font:normal 33px/33px 'Liberation Mono', monospace;white-space:pre"><span style="color:#C80000;">scroll-padding</span><span style="color:#202124;">:</span></div>
<div class="m" style="position:absolute;left:1854px;top:1827.61px;font:normal 33px/33px 'Liberation Mono', monospace;white-space:pre"><span style="color:#202124;">}</span></div>
<div style="position:absolute;left:1838px;top:1877px;width:1539px;height:2px;background:#CACDD1;"></div>
<div class="m" style="position:absolute;left:1854px;top:1888.71px;font:normal 33px/33px 'Liberation Mono', monospace;white-space:pre"><span style="color:#202124;font-style:italic">div {</span></div>
<div style="position:absolute;right:148px;top:1888.71px;font:italic normal 33px/33px 'Liberation Mono', monospace;color:#5F6368;white-space:pre">user agent stylesheet</div>
<div class="m" style="position:absolute;left:1907px;top:1935.71px;font:normal 33px/33px 'Liberation Mono', monospace;white-space:pre"><span style="color:#C80000;font-style:italic;text-decoration:line-through;text-decoration-color:#303942;text-decoration-thickness:2px">display</span><span style="color:#202124;font-style:italic;text-decoration:line-through;text-decoration-thickness:2px">: block;</span></div>
<div class="m" style="position:absolute;left:1854px;top:1976.71px;font:normal 33px/33px 'Liberation Mono', monospace;white-space:pre"><span style="color:#202124;font-style:italic">}</span></div>
<div style="position:absolute;left:1838px;top:2024px;width:1539px;height:2px;background:#CACDD1;"></div>
<svg style="position:absolute;left:2056px;top:1751px;" width="16" height="20" viewBox="0 0 16 20"><path d="M1 1 L15 10 L1 19 Z" fill="#6E6E6E"/></svg>
<svg style="position:absolute;left:2213px;top:1792px;" width="16" height="20" viewBox="0 0 16 20"><path d="M1 1 L15 10 L1 19 Z" fill="#6E6E6E"/></svg>
<div style="position:absolute;left:2287px;top:1745px;width:28px;height:28px;background:#000;box-shadow:0 0 0 1.5px #8A8A8A"></div>
<div class="m" style="position:absolute;left:2087px;top:1744.71px;font:normal 33px/33px 'Liberation Mono', monospace;white-space:pre"><span style="color:#202124;">1px solid</span></div>
<div class="m" style="position:absolute;left:2324px;top:1744.71px;font:normal 33px/33px 'Liberation Mono', monospace;white-space:pre"><span style="color:#202124;">black;</span></div>
<div class="m" style="position:absolute;left:2246px;top:1786.21px;font:normal 33px/33px 'Liberation Mono', monospace;white-space:pre"><span style="color:#202124;">10px;</span></div>
</div>
</body></html>
